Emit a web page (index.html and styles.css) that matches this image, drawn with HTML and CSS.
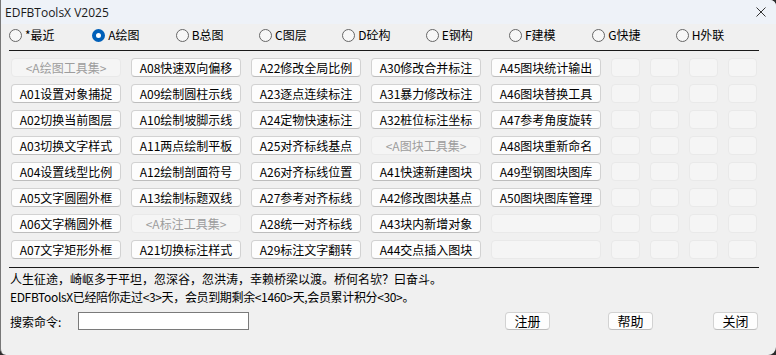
FILE: index.html
```html
<!DOCTYPE html>
<html lang="zh-CN">
<head>
  <meta charset="UTF-8">
  <meta name="viewport" content="width=device-width, initial-scale=1.0">
  <title>EDFBToolsX V2025</title>
  <link rel="stylesheet" href="styles.css">
</head>
<body>
  <div class="window">
    <div class="titlebar">
      <span class="title">EDFBToolsX V2025</span>
      <svg class="close" width="10" height="10" viewBox="0 0 10 10">
        <path d="M0.5 0.5 L9.5 9.5 M9.5 0.5 L0.5 9.5" stroke="#333" stroke-width="1" fill="none"/>
      </svg>
    </div>

    <div class="content">
      <div class="tabs">
        <label class="tab"><span class="radio"></span>*最近</label>
        <label class="tab active"><span class="radio"></span>A绘图</label>
        <label class="tab"><span class="radio"></span>B总图</label>
        <label class="tab"><span class="radio"></span>C图层</label>
        <label class="tab"><span class="radio"></span>D砼构</label>
        <label class="tab"><span class="radio"></span>E钢构</label>
        <label class="tab"><span class="radio"></span>F建模</label>
        <label class="tab"><span class="radio"></span>G快捷</label>
        <label class="tab"><span class="radio"></span>H外联</label>
      </div>

      <div class="rule"></div>

      <div class="grid">
        <button class="btn" disabled>&lt;A绘图工具集&gt;</button>
        <button class="btn">A08快速双向偏移</button>
        <button class="btn">A22修改全局比例</button>
        <button class="btn">A30修改合并标注</button>
        <button class="btn">A45图块统计输出</button>
        <button class="btn" disabled></button><button class="btn" disabled></button><button class="btn" disabled></button><button class="btn" disabled></button>

        <button class="btn">A01设置对象捕捉</button>
        <button class="btn">A09绘制圆柱示线</button>
        <button class="btn">A23逐点连续标注</button>
        <button class="btn">A31暴力修改标注</button>
        <button class="btn">A46图块替换工具</button>
        <button class="btn" disabled></button><button class="btn" disabled></button><button class="btn" disabled></button><button class="btn" disabled></button>

        <button class="btn">A02切换当前图层</button>
        <button class="btn">A10绘制坡脚示线</button>
        <button class="btn">A24定物快速标注</button>
        <button class="btn">A32桩位标注坐标</button>
        <button class="btn">A47参考角度旋转</button>
        <button class="btn" disabled></button><button class="btn" disabled></button><button class="btn" disabled></button><button class="btn" disabled></button>

        <button class="btn">A03切换文字样式</button>
        <button class="btn">A11两点绘制平板</button>
        <button class="btn">A25对齐标线基点</button>
        <button class="btn" disabled>&lt;A图块工具集&gt;</button>
        <button class="btn">A48图块重新命名</button>
        <button class="btn" disabled></button><button class="btn" disabled></button><button class="btn" disabled></button><button class="btn" disabled></button>

        <button class="btn">A04设置线型比例</button>
        <button class="btn">A12绘制剖面符号</button>
        <button class="btn">A26对齐标线位置</button>
        <button class="btn">A41快速新建图块</button>
        <button class="btn">A49型钢图块图库</button>
        <button class="btn" disabled></button><button class="btn" disabled></button><button class="btn" disabled></button><button class="btn" disabled></button>

        <button class="btn">A05文字圆圈外框</button>
        <button class="btn">A13绘制标题双线</button>
        <button class="btn">A27参考对齐标线</button>
        <button class="btn">A42修改图块基点</button>
        <button class="btn">A50图块图库管理</button>
        <button class="btn" disabled></button><button class="btn" disabled></button><button class="btn" disabled></button><button class="btn" disabled></button>

        <button class="btn">A06文字椭圆外框</button>
        <button class="btn" disabled>&lt;A标注工具集&gt;</button>
        <button class="btn">A28统一对齐标线</button>
        <button class="btn">A43块内新增对象</button>
        <button class="btn" disabled></button>
        <button class="btn" disabled></button><button class="btn" disabled></button><button class="btn" disabled></button><button class="btn" disabled></button>

        <button class="btn">A07文字矩形外框</button>
        <button class="btn">A21切换标注样式</button>
        <button class="btn">A29标注文字翻转</button>
        <button class="btn">A44交点插入图块</button>
        <button class="btn" disabled></button>
        <button class="btn" disabled></button><button class="btn" disabled></button><button class="btn" disabled></button><button class="btn" disabled></button>
      </div>

      <div class="rule rule-bottom"></div>

      <p class="line motto">人生征途，崎岖多于平坦，忽深谷，忽洪涛，幸赖桥梁以渡。桥何名欤？曰奋斗。</p>
      <p class="line status">EDFBToolsX已经陪你走过&lt;3&gt;天，会员到期剩余&lt;1460&gt;天,会员累计积分&lt;30&gt;。</p>

      <div class="search">
        <span class="search-label">搜索命令:</span>
        <input type="text" class="search-input">
        <button class="btn btn-action btn-reg">注册</button>
        <button class="btn btn-action btn-help">帮助</button>
        <button class="btn btn-action btn-close">关闭</button>
      </div>
    </div>
  </div>
</body>
</html>
```

FILE: styles.css
```css
* {
  margin: 0;
  padding: 0;
  box-sizing: border-box;
}
body {
  background: #2b2b2b;
  width: 776px;
  height: 355px;
  overflow: hidden;
  font-family: "Noto Sans CJK SC", "Noto Sans", sans-serif;
  font-size: 12px;
  color: #000;
}
.window {
  width: 776px;
  height: 355px;
  background: #f0f0f0;
  border-left: 1px solid #777;
  border-radius: 0 6px 8px 6px;
  overflow: hidden;
}
.titlebar {
  height: 24px;
  background: #eef2f8;
  display: flex;
  align-items: center;
  justify-content: space-between;
  padding: 0 10px 0 4px;
}
.title {
  font-family: "Open Sans", "Liberation Sans", sans-serif;
  font-size: 12px;
  color: #1a1a1a;
}
.content {
  padding: 0 17px 0 8px;
}
.tabs {
  display: flex;
  height: 22px;
  align-items: center;
}
.tab {
  width: 87px;
  display: flex;
  align-items: center;
  gap: 3px;
  font-size: 12px;
  line-height: 14px;
}
.radio {
  width: 13px;
  height: 13px;
  border-radius: 50%;
  border: 1px solid #666;
  background: #f7f7f7;
}
.tab.active .radio {
  border: 4px solid #005fb8;
  background: #fff;
}
.rule {
  height: 1px;
  background: #1a1a1a;
  margin-top: 4px;
}
.rule-bottom {
  margin-top: 8px;
}
.grid {
  display: grid;
  grid-template-columns: repeat(5, 110px) repeat(4, 29px);
  grid-auto-rows: 19px;
  column-gap: 10px;
  row-gap: 7px;
  margin: 7px 0 0 2px;
}
.btn {
  font-family: "Noto Sans CJK SC", sans-serif;
  font-size: 12px;
  line-height: 17px;
  color: #000;
  background: #fdfdfd;
  border: 1px solid #d2d2d2;
  border-bottom-color: #bdbdbd;
  border-radius: 4px;
  text-align: center;
  white-space: nowrap;
  overflow: hidden;
}
.btn:disabled {
  background: #f5f5f5;
  border-color: #e9e9e9;
  color: #9d9d9d;
}
.line {
  line-height: 18px;
  font-size: 12px;
  white-space: nowrap;
  padding-left: 1px;
}
.motto {
  margin-top: 2px;
}
.status {
  letter-spacing: -0.35px;
}
.search {
  display: flex;
  align-items: center;
  margin-top: 6px;
  height: 18px;
  padding-left: 1px;
}
.search-label {
  width: 68px;
  font-size: 12px;
}
.search-input {
  width: 171px;
  height: 18px;
  border: 1px solid #7a7a7a;
  background: #fff;
}
.btn-action {
  width: 45px;
  height: 18px;
  line-height: 16px;
  font-size: 13px;
}
.btn-reg {
  margin-left: 256px;
}
.btn-help {
  margin-left: 58px;
}
.btn-close {
  margin-left: 60px;
}
```
